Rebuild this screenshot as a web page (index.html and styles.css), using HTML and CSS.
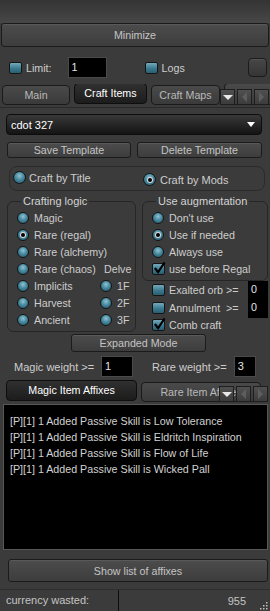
FILE: index.html
```html
<!DOCTYPE html>
<html lang="en">

<head>
  <meta charset="UTF-8">
  <meta name="viewport" content="width=device-width, initial-scale=1.0">
  <title>Crafter</title>
  <link rel="stylesheet" href="styles.css">
</head>

<body>
  <div class="window">
    <div class="title-strip"></div>
    <button class="btn minimize">Minimize</button>

    <div class="opts">
      <span class="check"></span>
      <span class="lbl limit-lbl">Limit:</span>
      <span class="field limit-field">1</span>
      <span class="check logs-check"></span>
      <span class="lbl">Logs</span>
      <button class="btn square"></button>
    </div>

    <div class="tabbar">
      <div class="tabs">
        <div class="tab tab-main">Main</div>
        <div class="tab tab-items active">Craft Items</div>
        <div class="tab tab-maps">Craft Maps</div>
        <div class="tab tab-more"></div>
      </div>
      <div class="tab-arrows">
        <span class="arrow-btn"><i class="tri-down"></i></span>
        <span class="arrow-btn"><i class="tri-left"></i></span>
        <span class="arrow-btn"><i class="tri-right"></i></span>
      </div>
    </div>

    <div class="page">
      <div class="combo">
        <span>cdot 327</span>
        <i class="tri-down white"></i>
      </div>

      <div class="template-row">
        <button class="btn small">Save Template</button>
        <button class="btn small">Delete Template</button>
      </div>

      <div class="mode-box">
        <div class="opt mode-title"><span class="radio"></span>Craft by Title</div>
        <div class="opt mode-mods"><span class="radio on"></span>Craft by Mods</div>
      </div>

      <div class="groups">
        <fieldset class="group logic">
          <legend>Crafting logic</legend>
          <div class="logic-grid">
            <div class="opt"><span class="radio"></span>Magic</div>
            <div></div>
            <div class="opt"><span class="radio on"></span>Rare (regal)</div>
            <div></div>
            <div class="opt"><span class="radio"></span>Rare (alchemy)</div>
            <div></div>
            <div class="opt"><span class="radio"></span>Rare (chaos)</div>
            <div class="opt delve">Delve</div>
            <div class="opt"><span class="radio"></span>Implicits</div>
            <div class="opt"><span class="radio"></span>1F</div>
            <div class="opt"><span class="radio"></span>Harvest</div>
            <div class="opt"><span class="radio"></span>2F</div>
            <div class="opt"><span class="radio"></span>Ancient</div>
            <div class="opt"><span class="radio"></span>3F</div>
          </div>
        </fieldset>

        <div class="aug-col">
          <fieldset class="group aug">
            <legend>Use augmentation</legend>
            <div class="opt"><span class="radio"></span>Don't use</div>
            <div class="opt"><span class="radio on"></span>Use if needed</div>
            <div class="opt"><span class="radio"></span>Always use</div>
            <div class="opt"><span class="check on"><svg viewBox="0 0 14 14"><path d="M2 7 L5.5 11.5 L12.5 1" /></svg></span>use before Regal</div>
          </fieldset>
          <div class="opt num-row"><span class="check"></span><span class="num-lbl">Exalted orb &gt;=</span><span class="field num">0</span></div>
          <div class="opt num-row"><span class="check"></span><span class="num-lbl">Annulment  &gt;=</span><span class="field num">0</span></div>
          <div class="opt comb-row"><span class="check on"><svg viewBox="0 0 14 14"><path d="M2 7 L5.5 11.5 L12.5 1" /></svg></span>Comb craft</div>
        </div>
      </div>

      <button class="btn expanded">Expanded Mode</button>

      <div class="weights">
        <span class="lbl">Magic weight &gt;=</span>
        <span class="field magic-w">1</span>
        <span class="lbl rare-lbl">Rare weight &gt;=</span>
        <span class="field rare-w">3</span>
      </div>

      <div class="tabbar tabbar2">
        <div class="tabs">
          <div class="tab tab-magic active">Magic Item Affixes</div>
          <div class="tab tab-rare">Rare Item Affixes</div>
        </div>
        <div class="tab-arrows">
          <span class="arrow-btn"><i class="tri-down"></i></span>
          <span class="arrow-btn"><i class="tri-left"></i></span>
          <span class="arrow-btn"><i class="tri-right"></i></span>
        </div>
      </div>

      <div class="affix-list">
        <p>[P][1] 1 Added Passive Skill is Low Tolerance</p>
        <p>[P][1] 1 Added Passive Skill is Eldritch Inspiration</p>
        <p>[P][1] 1 Added Passive Skill is Flow of Life</p>
        <p>[P][1] 1 Added Passive Skill is Wicked Pall</p>
      </div>

      <button class="btn show-list">Show list of affixes</button>
    </div>

    <div class="statusbar">
      <span class="status-lbl">currency wasted:</span>
      <span class="status-val">955</span>
      <svg class="grip" viewBox="0 0 10 10">
        <rect x="8" y="2" width="1.5" height="1.5" />
        <rect x="5" y="5" width="1.5" height="1.5" />
        <rect x="8" y="5" width="1.5" height="1.5" />
        <rect x="2" y="8" width="1.5" height="1.5" />
        <rect x="5" y="8" width="1.5" height="1.5" />
        <rect x="8" y="8" width="1.5" height="1.5" />
      </svg>
    </div>
  </div>
</body>

</html>
```

FILE: styles.css
```css
:root {
  --bg: #3b3b3b;
  --text: #cdcdcd;
  --edge: #1b1b1b;
}

* {
  box-sizing: border-box;
}

body {
  margin: 0;
  background: var(--bg);
  font-family: 'Liberation Sans', Arial, sans-serif;
  font-size: 10.7px;
  color: var(--text);
}

.window {
  width: 270px;
  height: 611px;
  display: flex;
  flex-direction: column;
  overflow: hidden;
}

.title-strip {
  height: 23px;
  background: linear-gradient(#343434, #474747);
}

.btn {
  font-family: inherit;
  font-size: 10.7px;
  color: #c4c4c4;
  border: 1px solid var(--edge);
  border-radius: 3px;
  background: linear-gradient(#4c4c4c, #3d3d3d);
  padding: 0;
  box-shadow: inset 0 1px 0 rgba(255, 255, 255, 0.08);
}

.minimize {
  height: 24px;
  margin: 0 1px;
}

/* option row under Minimize */
.opts {
  display: flex;
  align-items: center;
  height: 21px;
  margin-top: 10px;
  padding-left: 9px;
}

.check {
  position: relative;
  display: inline-block;
  flex: none;
  width: 13px;
  height: 12px;
  border: 1px solid #151515;
  border-radius: 2px;
  background: linear-gradient(#75a9ba, #3a7a90 55%, #2a5e6f);
}

.check svg {
  position: absolute;
  left: 0;
  top: -3px;
  width: 13px;
  height: 14px;
  fill: none;
  stroke: #000;
  stroke-width: 2.2;
}

.lbl {
  white-space: pre;
}

.limit-lbl {
  margin-left: 4px;
}

.field {
  display: inline-block;
  background: #000;
  color: #e4e4e4;
  border: 1px solid #4a4a4a;
  padding-left: 3px;
}

.limit-field {
  width: 39px;
  height: 21px;
  line-height: 19px;
  margin-left: 16px;
}

.logs-check {
  margin-left: 38px;
  margin-right: 4px;
}

.square {
  width: 19px;
  height: 19px;
  margin-left: auto;
  margin-right: 3px;
  border-radius: 4px;
  background: linear-gradient(#474747, #353535);
}

/* tab bars */
.tabbar {
  position: relative;
  height: 24px;
  margin-top: 6px;
  border-bottom: 1px solid #2a2a2a;
}

.tabs {
  display: flex;
  align-items: flex-end;
  height: 100%;
  overflow: hidden;
  padding-left: 2px;
  gap: 4px;
}

.tab {
  flex: none;
  height: 20px;
  line-height: 18px;
  margin-bottom: 2px;
  text-align: center;
  color: #b9b9b9;
  border: 1px solid #1a1a1a;
  border-radius: 4px;
  background: linear-gradient(#4a4a4a, #3a3a3a);
  white-space: nowrap;
}

.tab.active {
  height: 21px;
  margin-bottom: 3px;
  color: #fff;
  border-color: #0e0e0e;
  background: linear-gradient(#303030, #1c1c1c);
}

.tab-main {
  width: 68px;
}

.tab-items {
  width: 73px;
}

.tab-maps {
  width: 69px;
}

.tab-more {
  width: 70px;
  height: 22px;
}

.tab-arrows {
  position: absolute;
  right: 1px;
  bottom: 2px;
  display: flex;
  gap: 2px;
}

.arrow-btn {
  display: flex;
  align-items: center;
  justify-content: center;
  width: 15px;
  height: 16px;
  border: 1px solid #1e1e1e;
  background: linear-gradient(#505050, #3c3c3c);
}

.tri-down {
  border-left: 5px solid transparent;
  border-right: 5px solid transparent;
  border-top: 5px solid #e8e8e8;
}

.tri-left {
  border-top: 5px solid transparent;
  border-bottom: 5px solid transparent;
  border-right: 5px solid #5e5e5e;
}

.tri-right {
  border-top: 5px solid transparent;
  border-bottom: 5px solid transparent;
  border-left: 5px solid #5e5e5e;
}

/* page content */
.page {
  display: flex;
  flex-direction: column;
  padding: 0 2px 0 3px;
}

.combo {
  display: flex;
  align-items: center;
  justify-content: space-between;
  width: 256px;
  height: 21px;
  margin: 6px 0 0 3px;
  padding: 0 6px 0 4px;
  color: #fff;
  font-size: 11px;
  border: 1px solid #0c0c0c;
  border-radius: 4px;
  background: linear-gradient(#393939, #141414);
}

.tri-down.white {
  border-left-width: 4px;
  border-right-width: 4px;
  border-top-color: #fff;
}

.template-row {
  display: flex;
  gap: 6px;
  margin: 7px 0 0 4px;
}

.small {
  height: 16px;
  line-height: 14px;
  width: 124px;
}

.small + .small {
  width: 125px;
}

.mode-box {
  display: flex;
  height: 25px;
  width: 256px;
  margin: 8px 0 0 6px;
  border: 1px solid #2b2b2b;
  border-radius: 8px;
  padding-left: 3px;
}

.opt {
  display: flex;
  align-items: center;
  height: 17px;
  white-space: nowrap;
}

.mode-title {
  width: 130px;
  margin-top: 2px;
  font-size: 11px;
  gap: 3px;
}

.mode-mods {
  margin-top: 4px;
  font-size: 11px;
  gap: 4px;
}

.radio {
  position: relative;
  display: inline-block;
  flex: none;
  width: 12px;
  height: 12px;
  margin-right: 5px;
  border-radius: 50%;
  border: 1px solid #151515;
  background: radial-gradient(circle at 50% 35%, #93c2d0 0%, #478aa0 45%, #1f5064 100%);
}

.mode-box .radio {
  width: 13px;
  height: 13px;
  margin-right: 0;
}

.radio.on::after {
  content: '';
  position: absolute;
  left: 3px;
  top: 3px;
  width: 4px;
  height: 4px;
  border-radius: 50%;
  background: #000;
  box-shadow: 0 0 0 1px #d8d8d8;
}

.mode-box .radio.on::after {
  left: 3.5px;
  top: 3.5px;
}

.groups {
  display: flex;
  align-items: flex-start;
  height: 137px;
  margin-top: 4px;
  padding-left: 4px;
  gap: 6px;
}

.group {
  margin: 0;
  border: 1px solid #262626;
  border-radius: 6px;
  padding: 1px 0 4px 9px;
}

.group legend {
  padding: 0 2px;
  margin-left: 4px;
  line-height: 13px;
  color: #d4d4d4;
  font-size: 11px;
}

.logic {
  width: 129px;
  height: 137px;
}

.logic-grid {
  display: grid;
  grid-template-columns: 83px auto;
}

.delve {
  padding-left: 4px;
}

.aug-col {
  display: flex;
  flex-direction: column;
}

.aug {
  width: 126px;
  height: 86px;
}

.aug .check {
  margin-right: 4px;
}

.aug-col > .opt {
  padding-left: 10px;
}

.aug-col > .opt .check {
  margin-right: 4px;
}

.num-row {
  height: 18px;
}

.comb-row {
  height: 16px;
}

.num-lbl {
  white-space: pre;
  width: 79px;
}

.num {
  width: 20px;
  height: 19px;
  line-height: 17px;
  border: none;
}

.expanded {
  width: 135px;
  height: 18px;
  margin: 2px 0 0 68px;
  line-height: 16px;
}

.weights {
  display: flex;
  align-items: center;
  height: 21px;
  margin-top: 4px;
  padding-left: 11px;
  font-size: 11px;
}

.magic-w {
  width: 32px;
  height: 21px;
  line-height: 19px;
  margin-left: 7px;
}

.rare-lbl {
  margin-left: 19px;
}

.rare-w {
  width: 22px;
  height: 21px;
  line-height: 19px;
  margin-left: 7px;
}

.tabbar2 {
  margin: 3px 0 0 -3px;
  border-bottom: none;
}

.tabbar2 .tabs {
  padding-left: 6px;
}

.tab-magic {
  width: 131px;
}

.tab-rare {
  width: 120px;
}

.tabbar2 .tab-arrows {
  right: 0;
  bottom: 2px;
}

.affix-list {
  height: 146px;
  padding: 8px 6px;
  background: #000;
  border: 1px solid #575757;
  color: #d2d2d2;
  font-size: 10.7px;
}

.affix-list p {
  margin: 0;
  line-height: 16px;
  white-space: nowrap;
}

.show-list {
  height: 23px;
  margin: 9px 0 0 5px;
}

/* status bar */
.statusbar {
  position: relative;
  display: flex;
  align-items: center;
  height: 22px;
  margin-top: auto;
  border-top: 1px solid #2e2e2e;
  font-size: 11px;
  color: #c4c4c4;
}

.status-lbl {
  width: 119px;
  height: 100%;
  line-height: 21px;
  padding-left: 6px;
  border-right: 1px solid #0e0e0e;
}

.status-val {
  margin-left: auto;
  margin-right: 24px;
}

.grip {
  position: absolute;
  right: 2px;
  bottom: 1px;
  width: 10px;
  height: 10px;
  fill: #bdbdbd;
}
```
